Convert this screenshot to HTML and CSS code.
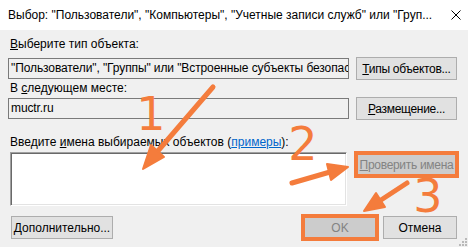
FILE: index.html
```html
<!DOCTYPE html>
<html lang="ru">
<head>
    <meta charset="UTF-8">
    <title>Выбор</title>
    <link rel="stylesheet" href="styles.css">
</head>
<body>
    <div class="titlebar">
        <span class="title">Выбор: "Пользователи", "Компьютеры", "Учетные записи служб" или "Груп...</span>
        <svg class="close" width="10" height="10" viewBox="0 0 10 10">
            <path d="M0.5 0.5 L9.5 9.5 M9.5 0.5 L0.5 9.5" stroke="#000" stroke-width="1"/>
        </svg>
    </div>
    <div class="dialog">
        <div class="label"><u>В</u>ыберите тип объекта:</div>
        <div class="row">
            <div class="textbox">"Пользователи", "Группы" или "Встроенные субъекты безопасности"</div>
            <button class="btn"><u>Т</u>ипы объектов...</button>
        </div>
        <div class="label label-second">В <u>с</u>ледующем месте:</div>
        <div class="row row-second">
            <div class="textbox">muctr.ru</div>
            <button class="btn"><u>Р</u>азмещение...</button>
        </div>
        <div class="label label-third">Введите <u>и</u>мена выбираемых объектов (<a href="#">примеры</a>):</div>
        <div class="row row-names">
            <div class="names"></div>
            <button class="btn disabled marked"><u>П</u>роверить имена</button>
        </div>
        <div class="row row-bottom">
            <button class="btn btn-more"><u>Д</u>ополнительно...</button>
            <div class="actions">
                <button class="btn btn-small disabled marked">OK</button>
                <button class="btn btn-small">Отмена</button>
            </div>
        </div>
    </div>

    <!-- annotations drawn over the dialog -->
    <svg class="marks" width="468" height="247" viewBox="0 0 468 247">
        <g stroke="#f47c3c" fill="#f47c3c" stroke-linecap="round" stroke-linejoin="round">
            <line x1="213" y1="87" x2="157" y2="152" stroke-width="5"/>
            <polygon points="143,169 164,157 151,145" stroke-width="2"/>
            <line x1="292" y1="183" x2="330" y2="172" stroke-width="5"/>
            <polygon points="348,167 331,180 327,164" stroke-width="2"/>
            <line x1="407" y1="183" x2="381" y2="200" stroke-width="5"/>
            <polygon points="364,211 385,207 376,193" stroke-width="2"/>
        </g>
        <g class="digits" fill="#f47c3c">
            <text x="151" y="130">1</text>
            <text x="303" y="160">2</text>
            <text x="428" y="212">3</text>
        </g>
    </svg>
    <svg class="grip" width="8" height="8" viewBox="0 0 8 8">
        <g fill="#b9b9b9">
            <rect x="6" y="0" width="2" height="2"/>
            <rect x="6" y="3" width="2" height="2"/>
            <rect x="3" y="3" width="2" height="2"/>
            <rect x="6" y="6" width="2" height="2"/>
            <rect x="3" y="6" width="2" height="2"/>
            <rect x="0" y="6" width="2" height="2"/>
        </g>
    </svg>
</body>
</html>
```

FILE: styles.css
```css
body {
    margin: 0;
    width: 468px;
    height: 247px;
    overflow: hidden;
    position: relative;
    background-color: #f0f0f0;
    color: #000;
    font-family: "Liberation Sans", Arial, sans-serif;
    font-size: 12px;
}
.titlebar {
    height: 30px;
    background-color: #fff;
    display: flex;
    align-items: center;
    padding: 0 7px 0 8px;
}
.title {
    flex: 1;
    white-space: nowrap;
    overflow: hidden;
}
.close {
    margin-left: 10px;
}
.dialog {
    padding: 7px 11px 0 8px;
}
.label {
    height: 15px;
    line-height: 15px;
    padding-left: 2px;
    white-space: nowrap;
}
.label-second {
    margin-top: 1px;
}
.label-third {
    margin-top: 15px;
}
.label a {
    color: #0066cc;
}
.row {
    display: flex;
    justify-content: space-between;
    align-items: center;
    height: 23px;
    margin-top: 5px;
}
.row-second {
    margin-top: 1px;
}
.textbox {
    box-sizing: border-box;
    width: 341px;
    height: 21px;
    line-height: 19px;
    padding: 0 2px;
    border: 1px solid #7a7a7a;
    background-color: #f0f0f0;
    letter-spacing: -0.1px;
    white-space: nowrap;
    overflow: hidden;
}
.row-names {
    height: 54px;
    margin-top: 2px;
    align-items: flex-start;
}
.names {
    box-sizing: border-box;
    width: 337px;
    height: 54px;
    margin-left: 2px;
    background-color: #fff;
    border-top: 1px solid #a0a0a0;
    border-left: 1px solid #a0a0a0;
    border-right: 1px solid #fff;
    border-bottom: 1px solid #fff;
    box-shadow: inset 1px 1px 0 #696969, inset -1px -1px 0 #e3e3e3;
}
.row-names .btn {
    margin-top: 1px;
}
.row-bottom {
    margin-top: 10px;
}
.btn {
    box-sizing: border-box;
    width: 101px;
    height: 23px;
    padding: 0;
    border: 1px solid #adadad;
    border-radius: 0;
    background-color: #e1e1e1;
    color: #000;
    font: inherit;
    letter-spacing: -0.3px;
    text-align: center;
    white-space: nowrap;
}
.btn.disabled {
    background-color: #cccccc;
    border-color: #bfbfbf;
    color: #838383;
}
.btn.marked {
    outline: 4px solid #f47c3c;
    outline-offset: -2px;
}
.btn-more {
    width: 102px;
    margin-left: 3px;
    letter-spacing: 0;
}
.actions {
    display: flex;
    gap: 6px;
}
.btn-small {
    width: 74px;
    letter-spacing: 0;
}
.marks {
    position: absolute;
    top: 0;
    left: 0;
    pointer-events: none;
}
.digits {
    font-family: "DejaVu Sans", sans-serif;
    font-size: 46px;
    text-anchor: middle;
}
.grip {
    position: absolute;
    right: 1px;
    bottom: 1px;
}
```
